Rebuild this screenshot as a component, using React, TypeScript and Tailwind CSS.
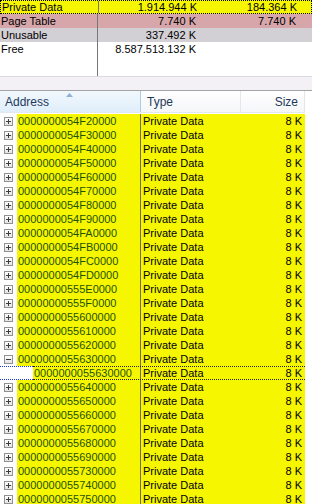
import React from "react";

const rows = [
  "0000000054F20000",
  "0000000054F30000",
  "0000000054F40000",
  "0000000054F50000",
  "0000000054F60000",
  "0000000054F70000",
  "0000000054F80000",
  "0000000054F90000",
  "0000000054FA0000",
  "0000000054FB0000",
  "0000000054FC0000",
  "0000000054FD0000",
  "00000000555E0000",
  "00000000555F0000",
  "0000000055600000",
  "0000000055610000",
  "0000000055620000",
  "0000000055630000",
  "child:0000000055630000",
  "0000000055640000",
  "0000000055650000",
  "0000000055660000",
  "0000000055670000",
  "0000000055680000",
  "0000000055690000",
  "0000000055730000",
  "0000000055740000",
  "0000000055750000",
];

function Expander({ open }: { open?: boolean }) {
  return (
    <span className="relative flex h-[9px] w-[9px] items-center justify-center border border-[#919191] bg-gradient-to-b from-white to-[#e3e3e3]">
      <span className="absolute h-px w-[5px] bg-[#3c3c3c]" />
      {!open && <span className="absolute h-[5px] w-px bg-[#3c3c3c]" />}
    </span>
  );
}

function SummaryRow({
  label,
  v1,
  v2,
  bg,
  focus,
}: {
  label: string;
  v1: string;
  v2?: string;
  bg: string;
  focus?: boolean;
}) {
  return (
    <div
      className={`flex h-[14px] items-center leading-none ${bg} ${
        focus ? "border border-dotted border-black" : ""
      }`}
    >
      <div className="flex h-full w-[98px] items-center border-r border-[#777] pl-[1px]">
        {label}
      </div>
      <div className="w-[101px] pr-[3px] text-right">{v1}</div>
      <div className="w-[99px] pr-[2px] text-right">{v2}</div>
    </div>
  );
}

function ListRow({ addr }: { addr: string }) {
  const child = addr.startsWith("child:");
  const text = child ? addr.slice(6) : addr;
  return (
    <div className="flex h-[14px] w-[305px] items-center leading-none">
      {child ? (
        <div className="h-full w-[33px] border-y border-dotted border-[#1a35d8]" />
      ) : (
        <div className="flex h-full w-[17px] items-center pl-[4px]">
          <Expander open={text === "0000000055630000"} />
        </div>
      )}
      <div
        className={`flex h-full flex-1 items-center bg-[#f6f600] ${
          child ? "border-y border-dotted border-[#222]" : ""
        }`}
      >
        <div
          className={`flex h-full items-center border-r border-[#6d6d6d] text-[#1f5200] ${
            child ? "w-[108px] pl-[1px]" : "w-[124px] pl-[1px]"
          }`}
        >
          {text}
        </div>
        <div className="flex-1 pl-[2px] text-black">Private Data</div>
        <div className="w-[40px] pr-[3px] text-right text-black">8 K</div>
      </div>
    </div>
  );
}

export default function App() {
  return (
    <div className="h-[504px] w-[312px] overflow-hidden bg-white font-['Liberation_Sans',sans-serif] text-[11px] text-black">
      {/* SUMMARY */}
      <div className="flex h-[76px] flex-col">
        <SummaryRow label="Private Data" v1="1.914.944 K" v2="184.364 K" bg="bg-[#f6f600]" focus />
        <SummaryRow label="Page Table" v1="7.740 K" v2="7.740 K" bg="bg-[#d6a6aa]" />
        <SummaryRow label="Unusable" v1="337.492 K" bg="bg-[#d3d0d5]" />
        <SummaryRow label="Free" v1="8.587.513.132 K" bg="bg-white" />
        <div className="flex flex-1">
          <div className="w-[98px] border-r border-[#777]" />
        </div>
      </div>

      {/* SPLITTER */}
      <div className="h-[15px] border-y border-t-[#dcdae0] border-b-[#a3a3a3] bg-[#f3f1f5]" />

      {/* HEADER */}
      <div className="flex h-[22px] w-[305px] border-b border-[#e3e8ef] text-[12px] leading-none">
        <div className="relative flex w-[141px] items-center border-r border-[#a9cde9] bg-gradient-to-b from-[#f2f8fd] to-[#dfeefa] pl-[5px] text-[#1e395b]">
          Address
          <svg className="absolute left-[66px] top-[2px]" width="7" height="4" viewBox="0 0 7 4">
            <path d="M3.5 0 L7 4 L0 4 Z" fill="#8fb2d4" />
          </svg>
        </div>
        <div className="flex w-[100px] items-center border-r border-[#e3e6ea] bg-gradient-to-b from-white to-[#f5f6f8] pl-[6px] text-[#1e395b]">
          Type
        </div>
        <div className="flex flex-1 items-center justify-end border-r border-[#e3e6ea] bg-gradient-to-b from-white to-[#f5f6f8] pr-[6px] text-[#1e395b]">
          Size
        </div>
      </div>

      {/* LIST */}
      <div className="flex flex-col pt-[1px]">
        {rows.map((r, i) => (
          <ListRow key={i} addr={r} />
        ))}
      </div>
    </div>
  );
}
